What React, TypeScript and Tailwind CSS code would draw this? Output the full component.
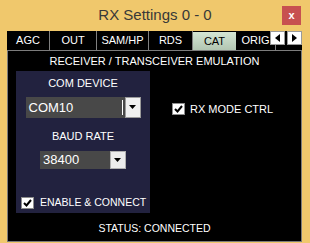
import React from 'react';

const tabs = [
  { label: 'AGC', w: 'w-[43px]' },
  { label: 'OUT', w: 'w-[47px]' },
  { label: 'SAM/HP', w: 'w-[52px]' },
  { label: 'RDS', w: 'w-[44px]' },
  { label: 'CAT', w: 'w-[43px]', active: true },
  { label: 'ORIG', w: 'w-[40px]' },
];

const DownArrow = () => (
  <svg width="8" height="5" viewBox="0 0 8 5"><path d="M0 0h7L3.5 4z" fill="#000" /></svg>
);

const CheckBox = () => (
  <div className="w-[13px] h-[12px] bg-white border border-[#8c8c8c] flex items-center justify-center shrink-0">
    <svg width="9" height="8" viewBox="0 0 9 8">
      <path d="M1 4l2.5 2.5L8 1" stroke="#000" strokeWidth="2" fill="none" />
    </svg>
  </div>
);

export default function App() {
  return (
    <div className="w-[310px] h-[243px] bg-[#f0c86c] flex flex-col overflow-hidden font-['Liberation_Sans',Arial,sans-serif]">
      <div className="relative h-[31px] flex justify-center pt-[6px]">
        <span className="text-[15px] leading-[18px] text-[#383838]">RX Settings 0 - 0</span>
        <div className="absolute right-[9px] top-[6px] w-[19px] h-[19px] bg-[#c75050] flex items-center justify-center text-white text-[11px] font-bold leading-none">
          x
        </div>
      </div>

      <div className="relative mx-[7px] w-[295px] h-[19px] bg-black flex">
        {tabs.map((t) => (
          <div
            key={t.label}
            className={`${t.w} shrink-0 flex items-center justify-center text-[11px] whitespace-nowrap ${
              t.active
                ? 'mt-[1px] bg-gradient-to-b from-[#d4e6d4] to-[#b2c6b2] text-black'
                : 'text-white border-r border-[#808080]'
            }`}
          >
            {t.label}
          </div>
        ))}
        <div className="absolute right-0 top-0 flex gap-[2px] bg-black">
          <div className="w-[15px] h-[14px] bg-white border border-[#9a9a9a] flex items-center justify-center">
            <svg width="5" height="8" viewBox="0 0 5 8"><path d="M5 0v8L0 4z" fill="#000" /></svg>
          </div>
          <div className="w-[15px] h-[14px] bg-white border border-[#9a9a9a] flex items-center justify-center">
            <svg width="5" height="8" viewBox="0 0 5 8"><path d="M0 0v8l5-4z" fill="#000" /></svg>
          </div>
        </div>
      </div>

      <div className="mx-[7px] w-[295px] flex-1 mb-[1px] bg-black border border-[#7c7c7c] flex flex-col text-white">
        <div className="h-[20px] flex items-center justify-center text-[11px]">
          RECEIVER / TRANSCEIVER EMULATION
        </div>

        <div className="flex">
          <div className="ml-[8px] w-[134px] h-[142px] bg-[#22223f] flex flex-col items-center pt-[5px] text-[11px]">
            <div className="leading-[14px]">COM DEVICE</div>
            <div className="mt-[7px] w-[115px] h-[21px] bg-[#484848] flex items-center">
              <span className="flex-1 pl-[3px] text-[13px]">COM10</span>
              <div className="w-[1px] h-[15px] bg-white" />
              <div className="ml-[2px] w-[16px] h-full bg-[#f0f0f0] border border-[#9a9a9a] flex items-center justify-center">
                <DownArrow />
              </div>
            </div>
            <div className="mt-[11px] leading-[14px]">BAUD RATE</div>
            <div className="mt-[8px] w-[86px] h-[18px] bg-[#484848] flex items-center">
              <span className="flex-1 pl-[3px] text-[13px]">38400</span>
              <div className="w-[16px] h-full bg-[#ececec] border border-[#b0b0b0] flex items-center justify-center">
                <DownArrow />
              </div>
            </div>
            <div className="self-start ml-[5px] mt-[26px] flex items-center gap-[6px] whitespace-nowrap text-[10.5px]">
              <CheckBox />
              <span>ENABLE &amp; CONNECT</span>
            </div>
          </div>

          <div className="ml-[22px] mt-[32px] flex items-center gap-[5px] h-[12px] text-[11px] whitespace-nowrap">
            <CheckBox />
            <span>RX MODE CTRL</span>
          </div>
        </div>

        <div className="flex-1 flex items-center justify-center pt-[3px] text-[10.5px]">
          STATUS: CONNECTED
        </div>
      </div>
    </div>
  );
}
